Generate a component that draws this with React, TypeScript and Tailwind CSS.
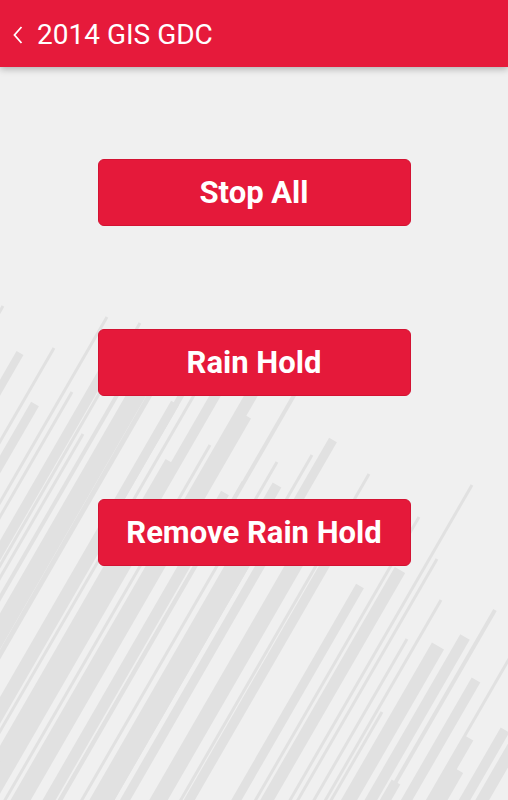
import React from "react";

type S = [number, number, number];

const stripes: S[] = [
  [3, 306, 3],
  [20, 353, 8],
  [54, 348, 3],
  [107, 317, 3],
  [140, 323, 3],
  [35, 404, 9],
  [72, 392, 3],
  [83, 434, 3],
  [145, 380, 18],
  [120, 390, 4],
  [110, 360, 10],
  [170, 360, 5],
  [230, 370, 10],
  [175, 403, 9],
  [197, 390, 3],
  [245, 415, 14],
  [210, 445, 3],
  [169, 461, 8],
  [243, 482, 3],
  [225, 493, 9],
  [190, 380, 6],
  [260, 380, 12],
  [300, 385, 4],
  [333, 440, 9],
  [312, 455, 3],
  [277, 462, 3],
  [277, 485, 10],
  [369, 474, 3],
  [472, 485, 3],
  [419, 517, 3],
  [437, 559, 3],
  [400, 570, 12],
  [360, 586, 9],
  [441, 600, 3],
  [407, 639, 3],
  [438, 646, 14],
  [465, 637, 11],
  [476, 680, 10],
  [382, 712, 3],
  [469, 738, 10],
  [458, 770, 12],
  [396, 782, 10],
  [520, 640, 3],
  [540, 700, 12],
  [505, 730, 10],
  [495, 610, 4],
  [330, 560, 6],
  [300, 555, 16],
  [250, 560, 4],
  [150, 520, 14],
  [200, 540, 10],
  [260, 530, 18],
  [350, 520, 8],
  [120, 510, 6],
];

function Rain() {
  return (
    <svg
      className="absolute inset-0 h-full w-full"
      viewBox="0 0 508 800"
      preserveAspectRatio="none"
      aria-hidden
    >
      {stripes.map(([x, y, w], i) => (
        <rect
          key={i}
          x={x - w / 2}
          y={y}
          width={w}
          height={1200}
          fill="#e1e1e1"
          transform={`rotate(30 ${x} ${y})`}
        />
      ))}
    </svg>
  );
}

function Btn({ label }: { label: string }) {
  return (
    <button className="flex h-[67px] w-[313px] items-center justify-center rounded-[6px] border border-[#d31232] bg-[#e5193a] pt-[2px] text-[31px] font-bold text-white">
      {label}
    </button>
  );
}

export default function App() {
  return (
    <div
      className="relative h-[800px] w-[508px] overflow-hidden bg-[#f0f0f0]"
      style={{ fontFamily: "Roboto, 'Noto Sans', sans-serif" }}
    >
      <Rain />
      <header className="relative z-20 flex h-[67px] items-center bg-[#e61a3b] pt-[3px] shadow-[0_2px_7px_rgba(0,0,0,0.28)]">
        <svg width="12" height="20" viewBox="0 0 12 20" className="ml-[12px]">
          <polyline points="9.5,2 2.5,10 9.5,18" fill="none" stroke="white" strokeWidth="1.8" />
        </svg>
        <span className="ml-[13px] text-[28px] leading-none text-white">2014 GIS GDC</span>
      </header>
      <main className="relative z-10 flex flex-col items-center gap-[103px] pt-[92px]">
        <Btn label="Stop All" />
        <Btn label="Rain Hold" />
        <Btn label="Remove Rain Hold" />
      </main>
    </div>
  );
}
